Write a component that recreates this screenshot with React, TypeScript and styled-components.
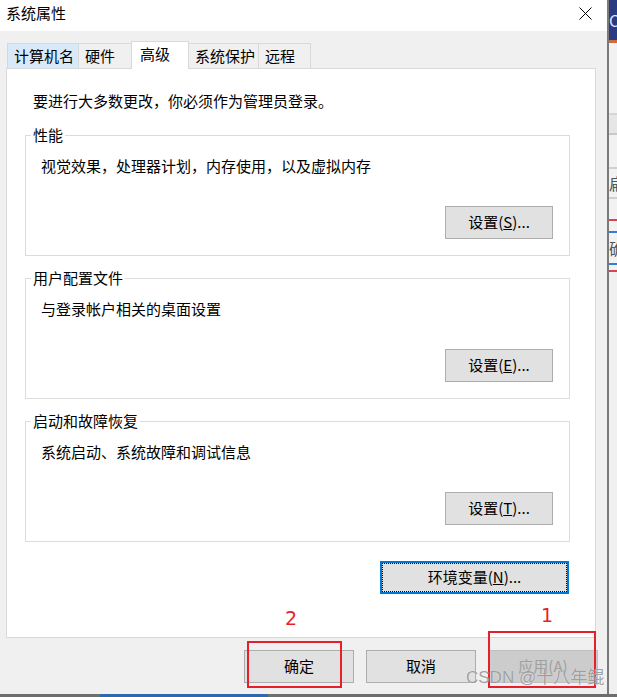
import React from "react";
import styled, { createGlobalStyle } from "styled-components";

const GlobalStyle = createGlobalStyle`
  html, body {
    margin: 0;
    padding: 0;
    background: #f0f0f0;
  }
  body {
    font-family: "Noto Sans CJK SC", "Noto Sans", sans-serif;
    font-size: 15px;
    color: #000;
  }
`;

const Screen = styled.div`
  position: relative;
  width: 617px;
  height: 697px;
  overflow: hidden;
  display: flex;
  flex-direction: column;
`;

const TopRow = styled.div`
  display: flex;
  height: 694px;
`;

const Dialog = styled.div`
  width: 607px;
  display: flex;
  flex-direction: column;
  background: #f0f0f0;
`;

const TitleBar = styled.div`
  height: 31px;
  background: #fff;
  display: flex;
  align-items: center;
  justify-content: space-between;
  padding: 0 15px 5px 6px;
  box-sizing: border-box;
  line-height: 20px;
`;

const Body = styled.div`
  flex: 1;
  padding: 10px 11px 0 6px;
  display: flex;
  flex-direction: column;
`;

const TabRow = styled.div`
  display: flex;
  align-items: flex-end;
  height: 27px;
  padding-left: 1px;
`;

const Tab = styled.div<{ w: number; active?: boolean; hover?: boolean }>`
  position: relative;
  box-sizing: border-box;
  width: ${(p) => p.w}px;
  height: ${(p) => (p.active ? 28 : 25)}px;
  margin-left: -1px;
  margin-bottom: ${(p) => (p.active ? -1 : 0)}px;
  padding-left: ${(p) => (p.active ? 8 : 6)}px;
  border: 1px solid ${(p) => (p.hover ? "#c3dcf2" : "#d9d9d9")};
  border-bottom: none;
  background: ${(p) => (p.active ? "#fff" : p.hover ? "#d8eaf9" : "#f0f0f0")};
  z-index: ${(p) => (p.active ? 1 : 0)};
  line-height: 24px;
  white-space: nowrap;
  &:first-child {
    margin-left: 0;
  }
`;

const Panel = styled.div`
  height: 570px;
  box-sizing: border-box;
  background: #fff;
  border: 1px solid #d9d9d9;
  padding: 22px 25px 0 18px;
  display: flex;
  flex-direction: column;
`;

const Intro = styled.div`
  line-height: 20px;
  margin-left: 8px;
  margin-bottom: 15px;
`;

const Group = styled.fieldset`
  margin: 0 0 13px 0;
  padding: 0;
  border: 1px solid #dcdcdc;
  min-width: 0;
`;

const Legend = styled.legend`
  margin-left: 5px;
  padding: 0 2px;
  line-height: 18px;
`;

const GroupBody = styled.div`
  padding: 12px 16px 16px 15px;
  display: flex;
  flex-direction: column;
`;

const Desc = styled.div`
  line-height: 20px;
  height: 20px;
  margin-bottom: 30px;
`;

const Row = styled.div<{ mt?: number; mr?: number }>`
  display: flex;
  justify-content: flex-end;
  gap: 12px;
  margin-top: ${(p) => p.mt ?? 0}px;
  margin-right: ${(p) => p.mr ?? 0}px;
`;

const Button = styled.div<{ w: number; h?: number; focused?: boolean; disabled?: boolean }>`
  box-sizing: border-box;
  width: ${(p) => p.w}px;
  height: ${(p) => p.h ?? 33}px;
  display: flex;
  align-items: center;
  justify-content: center;
  background: ${(p) => (p.disabled ? "#cccccc" : "#e1e1e1")};
  border: ${(p) =>
    p.focused ? "2px solid #0078d7" : p.disabled ? "1px solid #bfbfbf" : "1px solid #adadad"};
  color: ${(p) => (p.disabled ? "#a0a0a0" : "#000")};
  line-height: 20px;
  white-space: nowrap;
  padding-bottom: 1px;
  ${(p) =>
    p.focused &&
    `
    outline: 1px dotted #000;
    outline-offset: -3px;
  `}
`;

const CloseIcon = styled.svg`
  display: block;
  width: 13px;
  height: 13px;
`;

const Strip = styled.div`
  flex: 1;
  display: flex;
  flex-direction: column;
  border-left: 2px solid #7a7a7a;
  overflow: hidden;
`;

const StripPart = styled.div<{ h: number; bg: string; line?: string; light?: boolean }>`
  height: ${(p) => p.h}px;
  flex-shrink: 0;
  background: ${(p) => p.bg};
  border-bottom: ${(p) => (p.line ? `2px solid ${p.line}` : "none")};
  color: ${(p) => (p.light ? "#dfe6ff" : "#555")};
  font-size: 16px;
  line-height: ${(p) => p.h}px;
  white-space: nowrap;
  overflow: hidden;
`;

const BottomStrip = styled.div`
  height: 3px;
  display: flex;
  background: #6e6e6e;
`;

const BottomBlue = styled.div`
  margin-left: 100px;
  width: 168px;
  background: #2d69ad;
`;

const Mark = styled.div`
  position: absolute;
  border: 2px solid #e81f2a;
  box-sizing: border-box;
`;

const MarkNumber = styled.div`
  position: absolute;
  color: #e81f2a;
  font-family: "DejaVu Sans", "Liberation Sans", sans-serif;
  font-size: 19px;
  line-height: 20px;
`;

const Watermark = styled.div`
  position: absolute;
  left: 466px;
  top: 666px;
  font-family: "Liberation Sans", "Noto Sans CJK SC", sans-serif;
  font-size: 17px;
  line-height: 24px;
  color: rgba(120, 120, 120, 0.7);
  text-shadow: 0 0 1px rgba(255, 255, 255, 0.9);
  white-space: nowrap;
`;

const tabs = [
  { label: "计算机名", w: 72, hover: true },
  { label: "硬件", w: 54 },
  { label: "高级", w: 58, active: true },
  { label: "系统保护", w: 71 },
  { label: "远程", w: 53 },
];

const groups = [
  { title: "性能", desc: "视觉效果，处理器计划，内存使用，以及虚拟内存", key: "S" },
  { title: "用户配置文件", desc: "与登录帐户相关的桌面设置", key: "E" },
  { title: "启动和故障恢复", desc: "系统启动、系统故障和调试信息", key: "T" },
];

const stripParts = [
  { h: 40, bg: "#2c3a84", text: "C", light: true },
  { h: 3, bg: "#cf6b3a" },
  { h: 70, bg: "#f2f2f2", line: "#d6d6d6" },
  { h: 18, bg: "#e6e6e6", line: "#c9c9c9" },
  { h: 32, bg: "#f2f2f2", line: "#d0d0d0" },
  { h: 28, bg: "#f2f2f2", text: "扁", line: "#cfcfcf" },
  { h: 20, bg: "#f2f2f2", line: "#e04050" },
  { h: 10, bg: "#f2f2f2", line: "#2f7fd6" },
  { h: 30, bg: "#f2f2f2", text: "确", line: "#2f7fd6" },
  { h: 5, bg: "#f2f2f2", line: "#e04050" },
  { h: 400, bg: "#f0f0f0" },
];

export default function App(): JSX.Element {
  return (
    <>
      <GlobalStyle />
      <Screen>
        <TopRow>
          <Dialog>
            <TitleBar>
              <span>系统属性</span>
              <CloseIcon viewBox="0 0 13 13">
                <path d="M0.5 0.5 L12.5 12.5 M12.5 0.5 L0.5 12.5" stroke="#000" strokeWidth="1" />
              </CloseIcon>
            </TitleBar>
            <Body>
              <TabRow>
                {tabs.map((t) => (
                  <Tab key={t.label} w={t.w} active={t.active} hover={t.hover}>
                    {t.label}
                  </Tab>
                ))}
              </TabRow>
              <Panel>
                <Intro>要进行大多数更改，你必须作为管理员登录。</Intro>
                {groups.map((g) => (
                  <Group key={g.title}>
                    <Legend>{g.title}</Legend>
                    <GroupBody>
                      <Desc>{g.desc}</Desc>
                      <Row>
                        <Button w={108}>
                          设置(<u>{g.key}</u>)...
                        </Button>
                      </Row>
                    </GroupBody>
                  </Group>
                ))}
                <Row mt={6} mr={1}>
                  <Button w={189} h={33} focused>
                    环境变量(<u>N</u>)...
                  </Button>
                </Row>
              </Panel>
              <Row mt={12} mr={-2}>
                <Button w={110} h={33}>确定</Button>
                <Button w={110} h={33}>取消</Button>
                <Button w={110} h={33} disabled>
                  应用(A)
                </Button>
              </Row>
            </Body>
          </Dialog>
          <Strip>
            {stripParts.map((s, i) => (
              <StripPart key={i} h={s.h} bg={s.bg} line={s.line} light={s.light}>
                {s.text}
              </StripPart>
            ))}
          </Strip>
        </TopRow>
        <BottomStrip>
          <BottomBlue />
        </BottomStrip>

        <MarkNumber style={{ left: 285, top: 608 }}>2</MarkNumber>
        <Mark style={{ left: 247, top: 641, width: 95, height: 47 }} />
        <MarkNumber style={{ left: 541, top: 605 }}>1</MarkNumber>
        <Mark style={{ left: 488, top: 631, width: 108, height: 57 }} />
        <Watermark>CSDN @十八年鲲</Watermark>
      </Screen>
    </>
  );
}
